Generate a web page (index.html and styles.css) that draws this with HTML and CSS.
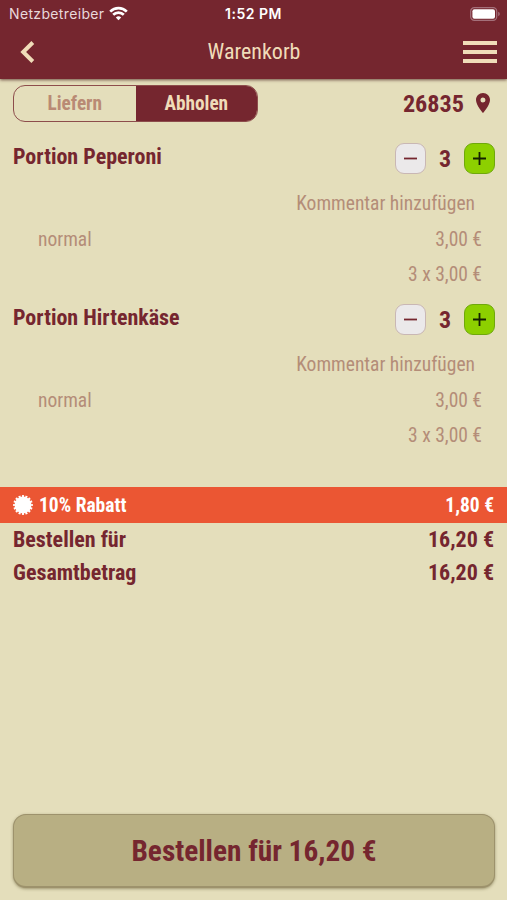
FILE: index.html
```html
<!DOCTYPE html>
<html lang="de">
<head>
  <meta charset="UTF-8" />
  <meta name="viewport" content="width=device-width, initial-scale=1.0"/>
  <title>Warenkorb</title>
  <link rel="stylesheet" href="styles.css">
</head>
<body>
  <header>
    <div class="status">
      <div class="carrier">
        <span>Netzbetreiber</span>
        <svg width="19" height="15" viewBox="0 0 19 15" fill="none" stroke="#fff" stroke-width="2.7">
          <path d="M1.2 5.6a11.8 11.8 0 0 1 16.6 0"/>
          <path d="M4.2 8.8a7.5 7.5 0 0 1 10.6 0"/>
          <path d="M9.5 14.2l-2.7-2.7a3.8 3.8 0 0 1 5.4 0z" fill="#fff" stroke="none"/>
        </svg>
      </div>
      <span class="time">1:52 PM</span>
      <svg class="battery" width="30" height="14" viewBox="0 0 30 14">
        <rect x=".7" y=".7" width="26" height="12.6" rx="3.6" fill="none" stroke="#a4707a" stroke-width="1.2"/>
        <rect x="2.4" y="2.3" width="22.6" height="9.4" rx="2" fill="#fff"/>
        <path d="M28.2 4.8q1.6.6 1.6 2.2t-1.6 2.2z" fill="#a4707a"/>
      </svg>
    </div>
    <nav>
      <svg width="15" height="22" viewBox="0 0 15 22" fill="none" stroke="#f0dcb9" stroke-width="4">
        <path d="M12.8 1.5L3.2 11l9.6 9.5"/>
      </svg>
      <h1>Warenkorb</h1>
      <div class="burger"><i></i><i></i><i></i></div>
    </nav>
  </header>

  <main>
    <div class="top-row">
      <div class="switch">
        <span>Liefern</span>
        <span class="active">Abholen</span>
      </div>
      <div class="place">
        <span>26835</span>
        <svg width="14" height="20" viewBox="5 2 14 20"><path fill="#75262f" fill-rule="evenodd" d="M12 2C8.1 2 5 5.1 5 9c0 5.200 7 13 7 13s7-7.800 7-13c0-3.900-3.100-7-7-7zm0 9.500a2.500 2.500 0 1 1 0-5 2.500 2.500 0 0 1 0 5z"/></svg>
      </div>
    </div>

    <section class="item">
      <div class="item-head">
        <h2>Portion Peperoni</h2>
        <div class="counter">
          <button class="minus"><svg width="13" height="13"><path d="M0 6.500h13" stroke="#75262f" stroke-width="1.8"/></svg></button>
          <b>3</b>
          <button class="plus"><svg width="13" height="13"><path d="M0 6.500h13M6.500 0v13" stroke="#142000" stroke-width="1.8"/></svg></button>
        </div>
      </div>
      <div class="line comment">Kommentar hinzufügen</div>
      <div class="line"><span>normal</span><span>3,00 €</span></div>
      <div class="line sum">3 x 3,00 €</div>
    </section>

    <section class="item">
      <div class="item-head">
        <h2>Portion Hirtenkäse</h2>
        <div class="counter">
          <button class="minus"><svg width="13" height="13"><path d="M0 6.500h13" stroke="#75262f" stroke-width="1.8"/></svg></button>
          <b>3</b>
          <button class="plus"><svg width="13" height="13"><path d="M0 6.500h13M6.500 0v13" stroke="#142000" stroke-width="1.8"/></svg></button>
        </div>
      </div>
      <div class="line comment">Kommentar hinzufügen</div>
      <div class="line"><span>normal</span><span>3,00 €</span></div>
      <div class="line sum">3 x 3,00 €</div>
    </section>

    <div class="discount">
      <svg width="20" height="20" viewBox="-10 -10 20 20">
        <circle r="8.4" fill="#fff"/>
        <!-- 16 teeth -->
        <circle r="8.8" fill="none" stroke="#fff" stroke-width="2.2" pathLength="32" stroke-dasharray="1.2 .8" stroke-dashoffset=".6"/>
      </svg>
      <span>10% Rabatt</span>
      <span class="amount">1,80 €</span>
    </div>
    <div class="total"><span>Bestellen für</span><span>16,20 €</span></div>
    <div class="total"><span>Gesamtbetrag</span><span>16,20 €</span></div>
  </main>

  <button class="order">Bestellen für 16,20 €</button>
</body>
</html>
```

FILE: styles.css
```css
* {
  box-sizing: border-box;
}
body {
  margin: 0;
  height: 900px;
  display: flex;
  flex-direction: column;
  background: #e4debb;
  color: #75262f;
  font-family: "Roboto Condensed", Roboto, sans-serif;
  font-stretch: 75%;
  overflow: hidden;
}
button {
  font: inherit;
  font-stretch: inherit;
  color: inherit;
  padding: 0;
}
svg {
  display: block;
  flex: none;
}
header {
  height: 79px;
  background: #75262f;
  color: #f0dcb9;
  box-shadow: 0 1px 3px rgba(60, 20, 20, 0.7);
}
.status {
  height: 27px;
  padding: 0 7px 0 9px;
  display: grid;
  grid-template-columns: 1fr auto 1fr;
  align-items: center;
  font-family: Inter, sans-serif;
  font-stretch: normal;
  font-size: 14px;
  color: #fff;
}
.carrier {
  display: flex;
  align-items: center;
  gap: 5px;
  color: #e9d9db;
  letter-spacing: 0.35px;
}
.time {
  margin-left: -2px;
  font-weight: 600;
  font-size: 14px;
  letter-spacing: 0.5px;
}
.battery {
  justify-self: end;
}
nav {
  height: 50px;
  padding: 0 10px 0 20px;
  display: grid;
  grid-template-columns: 1fr 92px 1fr;
  align-items: center;
}
nav h1 {
  margin: 0 0 0 -9px;
  font-size: 22px;
  font-weight: 400;
  line-height: 24px;
  text-align: center;
}
.burger {
  justify-self: end;
  width: 34px;
  display: grid;
  gap: 5px;
}
.burger i {
  height: 4px;
  background: #f0dcb9;
}
.top-row {
  height: 49px;
  padding: 6px 17px 6px 13px;
  display: flex;
  justify-content: space-between;
}
.switch {
  width: 245px;
  height: 37px;
  display: flex;
  border: 1.500px solid #8d4d4c;
  border-radius: 12px;
  overflow: hidden;
  font-size: 19.300px;
  font-weight: 700;
  line-height: 35px;
  text-align: center;
  color: #b98a74;
}
.switch span {
  flex: 1;
}
.switch .active {
  background: #75262f;
  color: #f0dcb9;
}
.place {
  display: flex;
  align-items: center;
  gap: 12px;
  font-size: 24.200px;
  font-weight: 700;
}
.place svg {
  margin-top: -2px;
}
.item {
  height: 161px;
}
.item-head {
  height: 58px;
  padding: 15px 12px 0 13px;
  display: flex;
  justify-content: space-between;
}
.item-head h2 {
  margin: 1px 0 0;
  font-size: 22px;
  line-height: 26px;
  font-weight: 700;
}
.counter {
  display: flex;
  align-items: flex-start;
  font-size: 24px;
  line-height: 32px;
}
.counter b {
  width: 38px;
  text-align: center;
}
.counter button {
  width: 31px;
  height: 31px;
  display: grid;
  place-items: center;
  border: 1px solid #c9b7b4;
  border-radius: 9px;
  background: #ebe9ea;
}
.counter .plus {
  background: #8dd000;
  border-color: #6fa80c;
}
.line {
  height: 35.500px;
  line-height: 35px;
  padding: 0 25px 0 38px;
  display: flex;
  justify-content: space-between;
  font-size: 19.500px;
  color: #b48d78;
}
.line.comment {
  justify-content: flex-end;
  padding-right: 32px;
}
.line.sum {
  justify-content: flex-end;
}
.discount {
  height: 36px;
  margin-top: 37px;
  padding: 0 13px;
  display: flex;
  align-items: center;
  gap: 6px;
  background: #eb5633;
  color: #fff;
  font-size: 19.500px;
  line-height: 34px;
  font-weight: 700;
}
.discount svg {
  margin-top: -1px;
}
.discount span {
  padding-top: 2px;
}
.discount .amount {
  margin-left: auto;
}
.total {
  height: 33px;
  line-height: 34px;
  padding: 0 13px;
  display: flex;
  justify-content: space-between;
  font-size: 22px;
  font-weight: 700;
}
.order {
  height: 74px;
  margin: auto 12px 12px 13px;
  border: 1px solid #9d926c;
  border-bottom-width: 2px;
  border-radius: 13px;
  background: #b8af83;
  box-shadow: 0 1px 3px rgba(90, 80, 40, 0.5);
  font-size: 29.300px;
  font-weight: 700;
}
```
